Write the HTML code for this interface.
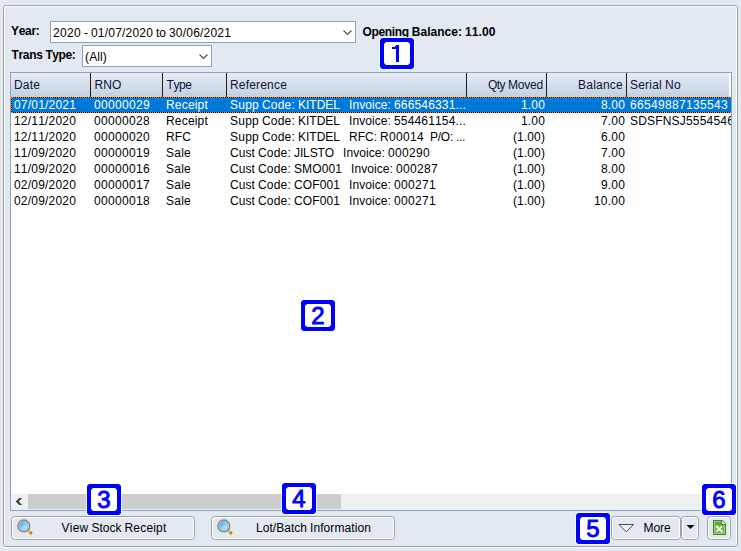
<!DOCTYPE html>
<html><head><meta charset="utf-8"><style>
*{margin:0;padding:0;box-sizing:border-box}
html,body{width:741px;height:551px;overflow:hidden;background:#e3e9f1;font-family:"Liberation Sans",sans-serif;font-size:12px;color:#000;font-kerning:none;font-variant-ligatures:none}
.a{position:absolute}
.t{position:absolute;white-space:pre}
.panel{position:absolute;left:3px;top:5px;width:735px;height:542px;border:1px solid #a0a0a0;border-radius:3px;box-shadow:inset 1px 1px 0 #fff,inset -1px 0 0 #fff,0 1px 0 #fff}
.combo{position:absolute;background:#fff;border:1px solid #89a3c0}
.btn{position:absolute;top:516px;height:24px;border:1px solid #a3a3a3;border-radius:3.5px;box-shadow:inset 1px 1px 0 #fff,inset -1px -1px 0 #fff}
</style></head><body>
<div class="panel"></div>
<div class="t" style="left:11.00px;top:24px;line-height:14px;font-weight:bold;letter-spacing:-0.304px">Year:</div>
<div class="combo" style="left:50px;top:21px;width:306px;height:22px"></div>
<div class="t" style="left:53.00px;top:26px;line-height:14px;letter-spacing:0.326px">2020</div>
<div class="t" style="left:84.00px;top:26px;line-height:14px;letter-spacing:0.004px">-</div>
<div class="t" style="left:91.00px;top:26px;line-height:14px;letter-spacing:0.194px">01/07/2020</div>
<div class="t" style="left:156.00px;top:26px;line-height:14px;letter-spacing:-0.004px">to</div>
<div class="t" style="left:169.00px;top:26px;line-height:14px;letter-spacing:0.194px">30/06/2021</div>
<svg class="a" style="left:340px;top:26px" width="14" height="12" viewBox="0 0 14 12"><path d="M3.5,4.5 L7.5,8.5 L11.5,4.5" fill="none" stroke="#505050" stroke-width="1.1"/></svg>
<div class="t" style="left:362.50px;top:25px;line-height:14px;font-weight:bold;letter-spacing:-0.337px">Opening</div>
<div class="t" style="left:411.76px;top:25px;line-height:14px;font-weight:bold;letter-spacing:0.028px">Balance:</div>
<div class="t" style="left:464.96px;top:25px;line-height:14px;font-weight:bold;letter-spacing:0.102px">11.00</div>
<div class="t" style="left:11.50px;top:48px;line-height:14px;font-weight:bold;letter-spacing:-0.324px">Trans</div>
<div class="t" style="left:45.38px;top:48px;line-height:14px;font-weight:bold;letter-spacing:-0.377px">Type:</div>
<div class="combo" style="left:82px;top:45px;width:130px;height:22px"></div>
<div class="t" style="left:85.00px;top:50px;line-height:14px;letter-spacing:0.134px">(All)</div>
<svg class="a" style="left:196px;top:50px" width="14" height="12" viewBox="0 0 14 12"><path d="M3.5,4.5 L7.5,8.5 L11.5,4.5" fill="none" stroke="#505050" stroke-width="1.1"/></svg>
<div class="a" style="left:10px;top:72px;width:722px;height:439px;border:1px solid #8ca3bc;background:#fff"></div>
<div class="a" style="left:11px;top:73px;width:718px;height:24px;background:linear-gradient(#e7ecf5,#c3d0e1)"></div>
<div class="a" style="left:90px;top:73px;width:1px;height:24px;background:#1e1e1e"></div>
<div class="a" style="left:162px;top:73px;width:1px;height:24px;background:#1e1e1e"></div>
<div class="a" style="left:226px;top:73px;width:1px;height:24px;background:#1e1e1e"></div>
<div class="a" style="left:466px;top:73px;width:1px;height:24px;background:#1e1e1e"></div>
<div class="a" style="left:546px;top:73px;width:1px;height:24px;background:#1e1e1e"></div>
<div class="a" style="left:626px;top:73px;width:1px;height:24px;background:#1e1e1e"></div>
<div class="t" style="left:14.00px;top:73px;line-height:24px;color:#10103a;letter-spacing:0.163px">Date</div>
<div class="t" style="left:94.50px;top:73px;line-height:24px;color:#10103a;letter-spacing:0.111px">RNO</div>
<div class="t" style="left:166.50px;top:73px;line-height:24px;color:#10103a;letter-spacing:-0.419px">Type</div>
<div class="t" style="left:230.00px;top:73px;line-height:24px;color:#10103a;letter-spacing:0.182px">Reference</div>
<div class="t" style="left:488.00px;top:73px;line-height:24px;color:#10103a;letter-spacing:-0.533px">Qty</div>
<div class="t" style="left:507.91px;top:73px;line-height:24px;color:#10103a;letter-spacing:-0.186px">Moved</div>
<div class="t" style="left:578.00px;top:73px;line-height:24px;color:#10103a;letter-spacing:0.234px">Balance</div>
<div class="t" style="left:630.00px;top:73px;line-height:24px;color:#10103a;letter-spacing:0.220px">Serial</div>
<div class="t" style="left:665.00px;top:73px;line-height:24px;color:#10103a;letter-spacing:0.330px">No</div>
<div class="a" style="left:11px;top:97px;width:720px;height:16px;background:#0078d7"></div>
<div class="t" style="left:14.00px;top:97px;line-height:16px;color:#fff;letter-spacing:0.194px">07/01/2021</div>
<div class="t" style="left:94.00px;top:97px;line-height:16px;color:#fff;letter-spacing:0.326px">00000029</div>
<div class="t" style="left:166.00px;top:97px;line-height:16px;color:#fff;letter-spacing:0.188px">Receipt</div>
<div class="t" style="left:230.00px;top:97px;line-height:16px;color:#fff;letter-spacing:0.244px">Supp</div>
<div class="t" style="left:262.00px;top:97px;line-height:16px;color:#fff;letter-spacing:0.196px">Code:</div>
<div class="t" style="left:298.00px;top:97px;line-height:16px;color:#fff;letter-spacing:-0.002px">KITDEL</div>
<div class="t" style="left:349.00px;top:97px;line-height:16px;color:#fff;letter-spacing:0.081px">Invoice:</div>
<div class="t" style="left:394.00px;top:97px;line-height:16px;color:#fff;letter-spacing:0.161px">666546331...</div>
<div class="t" style="left:521.00px;top:97px;line-height:16px;color:#fff;letter-spacing:0.161px">1.00</div>
<div class="t" style="left:601.00px;top:97px;line-height:16px;color:#fff;letter-spacing:0.161px">8.00</div>
<div class="a" style="left:627px;top:97px;width:104px;height:16px;overflow:hidden"><div class="t" style="left:3.00px;top:0px;line-height:16px;color:#fff;letter-spacing:0.326px">66549887135543</div></div>
<div class="t" style="left:14.00px;top:113px;line-height:16px;letter-spacing:0.194px">12/11/2020</div>
<div class="t" style="left:94.00px;top:113px;line-height:16px;letter-spacing:0.326px">00000028</div>
<div class="t" style="left:166.00px;top:113px;line-height:16px;letter-spacing:0.188px">Receipt</div>
<div class="t" style="left:230.00px;top:113px;line-height:16px;letter-spacing:0.244px">Supp</div>
<div class="t" style="left:262.00px;top:113px;line-height:16px;letter-spacing:0.196px">Code:</div>
<div class="t" style="left:298.00px;top:113px;line-height:16px;letter-spacing:-0.002px">KITDEL</div>
<div class="t" style="left:349.00px;top:113px;line-height:16px;letter-spacing:0.081px">Invoice:</div>
<div class="t" style="left:394.00px;top:113px;line-height:16px;letter-spacing:0.161px">554461154...</div>
<div class="t" style="left:521.00px;top:113px;line-height:16px;letter-spacing:0.161px">1.00</div>
<div class="t" style="left:601.00px;top:113px;line-height:16px;letter-spacing:0.161px">7.00</div>
<div class="a" style="left:627px;top:113px;width:104px;height:16px;overflow:hidden"><div class="t" style="left:3.00px;top:0px;line-height:16px;letter-spacing:0.186px">SDSFNSJ5554546</div></div>
<div class="t" style="left:14.00px;top:129px;line-height:16px;letter-spacing:0.194px">12/11/2020</div>
<div class="t" style="left:94.00px;top:129px;line-height:16px;letter-spacing:0.326px">00000020</div>
<div class="t" style="left:166.00px;top:129px;line-height:16px;letter-spacing:0.113px">RFC</div>
<div class="t" style="left:230.00px;top:129px;line-height:16px;letter-spacing:0.244px">Supp</div>
<div class="t" style="left:262.00px;top:129px;line-height:16px;letter-spacing:0.196px">Code:</div>
<div class="t" style="left:298.00px;top:129px;line-height:16px;letter-spacing:-0.002px">KITDEL</div>
<div class="t" style="left:349.00px;top:129px;line-height:16px;letter-spacing:0.001px">RFC:</div>
<div class="t" style="left:380.00px;top:129px;line-height:16px;letter-spacing:0.327px">R00014</div>
<div class="t" style="left:430.00px;top:129px;line-height:16px;letter-spacing:-0.251px">P/O:</div>
<div class="t" style="left:456.00px;top:129px;line-height:16px;letter-spacing:-0.334px">...</div>
<div class="t" style="left:513.00px;top:129px;line-height:16px;letter-spacing:0.109px">(1.00)</div>
<div class="t" style="left:601.00px;top:129px;line-height:16px;letter-spacing:0.161px">6.00</div>
<div class="t" style="left:14.00px;top:145px;line-height:16px;letter-spacing:0.194px">11/09/2020</div>
<div class="t" style="left:94.00px;top:145px;line-height:16px;letter-spacing:0.326px">00000019</div>
<div class="t" style="left:166.00px;top:145px;line-height:16px;letter-spacing:0.246px">Sale</div>
<div class="t" style="left:230.00px;top:145px;line-height:16px;letter-spacing:0.082px">Cust</div>
<div class="t" style="left:258.00px;top:145px;line-height:16px;letter-spacing:0.196px">Code:</div>
<div class="t" style="left:294.00px;top:145px;line-height:16px;letter-spacing:-0.113px">JILSTO</div>
<div class="t" style="left:343.00px;top:145px;line-height:16px;letter-spacing:0.081px">Invoice:</div>
<div class="t" style="left:388.00px;top:145px;line-height:16px;letter-spacing:0.326px">000290</div>
<div class="t" style="left:513.00px;top:145px;line-height:16px;letter-spacing:0.109px">(1.00)</div>
<div class="t" style="left:601.00px;top:145px;line-height:16px;letter-spacing:0.161px">7.00</div>
<div class="t" style="left:14.00px;top:161px;line-height:16px;letter-spacing:0.194px">11/09/2020</div>
<div class="t" style="left:94.00px;top:161px;line-height:16px;letter-spacing:0.326px">00000016</div>
<div class="t" style="left:166.00px;top:161px;line-height:16px;letter-spacing:0.246px">Sale</div>
<div class="t" style="left:230.00px;top:161px;line-height:16px;letter-spacing:0.082px">Cust</div>
<div class="t" style="left:258.00px;top:161px;line-height:16px;letter-spacing:0.196px">Code:</div>
<div class="t" style="left:294.00px;top:161px;line-height:16px;letter-spacing:0.107px">SMO001</div>
<div class="t" style="left:351.00px;top:161px;line-height:16px;letter-spacing:0.081px">Invoice:</div>
<div class="t" style="left:396.00px;top:161px;line-height:16px;letter-spacing:0.326px">000287</div>
<div class="t" style="left:513.00px;top:161px;line-height:16px;letter-spacing:0.109px">(1.00)</div>
<div class="t" style="left:601.00px;top:161px;line-height:16px;letter-spacing:0.161px">8.00</div>
<div class="t" style="left:14.00px;top:177px;line-height:16px;letter-spacing:0.194px">02/09/2020</div>
<div class="t" style="left:94.00px;top:177px;line-height:16px;letter-spacing:0.326px">00000017</div>
<div class="t" style="left:166.00px;top:177px;line-height:16px;letter-spacing:0.246px">Sale</div>
<div class="t" style="left:230.00px;top:177px;line-height:16px;letter-spacing:0.082px">Cust</div>
<div class="t" style="left:258.00px;top:177px;line-height:16px;letter-spacing:0.196px">Code:</div>
<div class="t" style="left:294.00px;top:177px;line-height:16px;letter-spacing:0.108px">COF001</div>
<div class="t" style="left:349.00px;top:177px;line-height:16px;letter-spacing:0.081px">Invoice:</div>
<div class="t" style="left:394.00px;top:177px;line-height:16px;letter-spacing:0.326px">000271</div>
<div class="t" style="left:513.00px;top:177px;line-height:16px;letter-spacing:0.109px">(1.00)</div>
<div class="t" style="left:601.00px;top:177px;line-height:16px;letter-spacing:0.161px">9.00</div>
<div class="t" style="left:14.00px;top:193px;line-height:16px;letter-spacing:0.194px">02/09/2020</div>
<div class="t" style="left:94.00px;top:193px;line-height:16px;letter-spacing:0.326px">00000018</div>
<div class="t" style="left:166.00px;top:193px;line-height:16px;letter-spacing:0.246px">Sale</div>
<div class="t" style="left:230.00px;top:193px;line-height:16px;letter-spacing:0.082px">Cust</div>
<div class="t" style="left:258.00px;top:193px;line-height:16px;letter-spacing:0.196px">Code:</div>
<div class="t" style="left:294.00px;top:193px;line-height:16px;letter-spacing:0.108px">COF001</div>
<div class="t" style="left:349.00px;top:193px;line-height:16px;letter-spacing:0.081px">Invoice:</div>
<div class="t" style="left:394.00px;top:193px;line-height:16px;letter-spacing:0.326px">000271</div>
<div class="t" style="left:513.00px;top:193px;line-height:16px;letter-spacing:0.109px">(1.00)</div>
<div class="t" style="left:594.00px;top:193px;line-height:16px;letter-spacing:0.194px">10.00</div>
<div class="a" style="left:11px;top:97px;width:720px;height:16px;border:1px solid #000;border-right:none"></div>
<div class="a" style="left:11px;top:97px;width:720px;height:16px;border:1px dotted #ff8728;border-right:none"></div>
<div class="a" style="left:729px;top:73px;width:2px;height:24px;background:#fff"></div>
<div class="a" style="left:11px;top:494px;width:720px;height:16px;background:#f0f0f0"></div>
<div class="a" style="left:28px;top:494px;width:313px;height:15px;background:#cdcdcd"></div>
<svg class="a" style="left:11px;top:494px" width="17" height="16" viewBox="0 0 17 16"><path d="M11.2,4 H8.2 L4.7,7.5 L8.2,11 H11.2 L7.7,7.5 Z" fill="#404040"/></svg>
<div class="btn" style="left:11px;width:184px"></div>
<svg class="a" style="left:11px;top:516px" width="30" height="24" viewBox="0 0 30 24">
<defs><linearGradient id="lg1" x1="0" y1="0" x2="1" y2="1"><stop offset="0" stop-color="#3f98e6"/><stop offset="0.6" stop-color="#9fdcf7"/><stop offset="1" stop-color="#c9f2fb"/></linearGradient>
<linearGradient id="og1" x1="0" y1="0" x2="1" y2="1"><stop offset="0" stop-color="#f7c760"/><stop offset="1" stop-color="#d9820c"/></linearGradient></defs>
<path d="M18.3,15.4 L19.8,16.9" stroke="url(#og1)" stroke-width="3.4" stroke-linecap="round"/>
<path d="M16.7,13.8 L17.9,15" stroke="#a9b4bd" stroke-width="2.4"/>
<circle cx="12.8" cy="9.9" r="5.9" fill="#fff" stroke="#858585" stroke-width="1.5"/>
<circle cx="12.8" cy="9.9" r="4.3" fill="url(#lg1)" stroke="#5aa8ea" stroke-width="0.8"/>
</svg>
<div class="t" style="left:61.50px;top:516px;line-height:24px;letter-spacing:0.248px">View</div>
<div class="t" style="left:91.50px;top:516px;line-height:24px;letter-spacing:-0.002px">Stock</div>
<div class="t" style="left:124.50px;top:516px;line-height:24px;letter-spacing:0.188px">Receipt</div>
<div class="btn" style="left:211px;width:184px"></div>
<svg class="a" style="left:211px;top:516px" width="30" height="24" viewBox="0 0 30 24">
<defs><linearGradient id="lg2" x1="0" y1="0" x2="1" y2="1"><stop offset="0" stop-color="#3f98e6"/><stop offset="0.6" stop-color="#9fdcf7"/><stop offset="1" stop-color="#c9f2fb"/></linearGradient>
<linearGradient id="og2" x1="0" y1="0" x2="1" y2="1"><stop offset="0" stop-color="#f7c760"/><stop offset="1" stop-color="#d9820c"/></linearGradient></defs>
<path d="M18.3,15.4 L19.8,16.9" stroke="url(#og2)" stroke-width="3.4" stroke-linecap="round"/>
<path d="M16.7,13.8 L17.9,15" stroke="#a9b4bd" stroke-width="2.4"/>
<circle cx="12.8" cy="9.9" r="5.9" fill="#fff" stroke="#858585" stroke-width="1.5"/>
<circle cx="12.8" cy="9.9" r="4.3" fill="url(#lg2)" stroke="#5aa8ea" stroke-width="0.8"/>
</svg>
<div class="t" style="left:256.00px;top:516px;line-height:24px;letter-spacing:0.033px">Lot/Batch</div>
<div class="t" style="left:310.00px;top:516px;line-height:24px;letter-spacing:0.088px">Information</div>
<div class="btn" style="left:611px;width:70px"></div>
<svg class="a" style="left:611px;top:516px" width="30" height="24" viewBox="0 0 30 24"><defs><linearGradient id="wg" x1="0" y1="0" x2="0" y2="1"><stop offset="0" stop-color="#eeeeee"/><stop offset="1" stop-color="#fff"/></linearGradient></defs><path d="M8,8.5 H22.5 L15.2,15.8 Z" fill="url(#wg)" stroke="#4a4a4a" stroke-width="1" stroke-linejoin="miter"/></svg>
<div class="t" style="left:643.50px;top:516px;line-height:24px;letter-spacing:-0.085px">More</div>
<div class="btn" style="left:681px;width:18px"></div>
<svg class="a" style="left:681.5px;top:516px" width="17" height="24" viewBox="0 0 17 24"><path d="M4.5,9 H12.5 L8.5,13 Z" fill="#000"/></svg>
<div class="btn" style="left:707px;width:24px"></div>
<svg class="a" style="left:707px;top:516px" width="24" height="24" viewBox="0 0 24 24">
<path d="M6,4 H15.5 L19,7.5 V19 H6 Z" fill="#3d8b1d"/>
<path d="M7,5 H15 L18,8 V18 H7 Z" fill="#9ad47a"/>
<path d="M8,6 H14.5 L17,8.5 V17 H8 Z" fill="#72b84a"/>
<path d="M8,6 H14 V9 H8 Z" fill="#67a03c"/>
<path d="M14.5,4.3 L18.7,8.5 H14.5 Z" fill="#fff"/>
<path d="M14.5,4 V8.5 H19" fill="none" stroke="#3d8b1d" stroke-width="1"/>
<path d="M9.5,10.5 L15.5,16 M15,10.5 L9.5,15.5 M9,10.7 H11" stroke="#fff" stroke-width="1.7" fill="none"/>
</svg>
<svg class="a" style="left:380px;top:38px;overflow:visible" width="34" height="31" viewBox="0 0 34 31">
<path d="M1.5,-0.5 H32.5 L34.5,1.5 V29.5 L32.5,31.5 H1.5 L-0.5,29.5 V1.5 Z" fill="none" stroke="#fff" stroke-opacity="0.7" stroke-width="1"/>
<path d="M2,0 H32 L34,2 V29 L32,31 H2 L0,29 V2 Z" fill="#0000ff"/>
<path d="M6,4 H28 L30,6 V25 L28,27 H6 L4,25 V6 Z" fill="#fff"/>
<path d="M16,7 H19 V24 H16 Z M12,9 H16 V11 H12 Z M15,8 H16 V9 H15 Z" fill="#0000ff"/>
</svg>
<svg class="a" style="left:301px;top:300px;overflow:visible" width="34" height="31" viewBox="0 0 34 31">
<path d="M1.5,-0.5 H32.5 L34.5,1.5 V29.5 L32.5,31.5 H1.5 L-0.5,29.5 V1.5 Z" fill="none" stroke="#fff" stroke-opacity="0.7" stroke-width="1"/>
<path d="M2,0 H32 L34,2 V29 L32,31 H2 L0,29 V2 Z" fill="#0000ff"/>
<path d="M6,4 H28 L30,6 V25 L28,27 H6 L4,25 V6 Z" fill="#fff"/>
<text x="17" y="24" text-anchor="middle" font-size="24" fill="#0000ff" stroke="#0000ff" stroke-width="0.9" font-family="Liberation Sans">2</text>
</svg>
<svg class="a" style="left:87px;top:484px;overflow:visible" width="34" height="31" viewBox="0 0 34 31">
<path d="M1.5,-0.5 H32.5 L34.5,1.5 V29.5 L32.5,31.5 H1.5 L-0.5,29.5 V1.5 Z" fill="none" stroke="#fff" stroke-opacity="0.7" stroke-width="1"/>
<path d="M2,0 H32 L34,2 V29 L32,31 H2 L0,29 V2 Z" fill="#0000ff"/>
<path d="M6,4 H28 L30,6 V25 L28,27 H6 L4,25 V6 Z" fill="#fff"/>
<text x="17" y="24" text-anchor="middle" font-size="24" fill="#0000ff" stroke="#0000ff" stroke-width="0.9" font-family="Liberation Sans">3</text>
</svg>
<svg class="a" style="left:282px;top:483px;overflow:visible" width="34" height="31" viewBox="0 0 34 31">
<path d="M1.5,-0.5 H32.5 L34.5,1.5 V29.5 L32.5,31.5 H1.5 L-0.5,29.5 V1.5 Z" fill="none" stroke="#fff" stroke-opacity="0.7" stroke-width="1"/>
<path d="M2,0 H32 L34,2 V29 L32,31 H2 L0,29 V2 Z" fill="#0000ff"/>
<path d="M6,4 H28 L30,6 V25 L28,27 H6 L4,25 V6 Z" fill="#fff"/>
<text x="17" y="24" text-anchor="middle" font-size="24" fill="#0000ff" stroke="#0000ff" stroke-width="0.9" font-family="Liberation Sans">4</text>
</svg>
<svg class="a" style="left:576px;top:513px;overflow:visible" width="34" height="31" viewBox="0 0 34 31">
<path d="M1.5,-0.5 H32.5 L34.5,1.5 V29.5 L32.5,31.5 H1.5 L-0.5,29.5 V1.5 Z" fill="none" stroke="#fff" stroke-opacity="0.7" stroke-width="1"/>
<path d="M2,0 H32 L34,2 V29 L32,31 H2 L0,29 V2 Z" fill="#0000ff"/>
<path d="M6,4 H28 L30,6 V25 L28,27 H6 L4,25 V6 Z" fill="#fff"/>
<text x="17" y="24" text-anchor="middle" font-size="24" fill="#0000ff" stroke="#0000ff" stroke-width="0.9" font-family="Liberation Sans">5</text>
</svg>
<svg class="a" style="left:702px;top:484px;overflow:visible" width="34" height="31" viewBox="0 0 34 31">
<path d="M1.5,-0.5 H32.5 L34.5,1.5 V29.5 L32.5,31.5 H1.5 L-0.5,29.5 V1.5 Z" fill="none" stroke="#fff" stroke-opacity="0.7" stroke-width="1"/>
<path d="M2,0 H32 L34,2 V29 L32,31 H2 L0,29 V2 Z" fill="#0000ff"/>
<path d="M6,4 H28 L30,6 V25 L28,27 H6 L4,25 V6 Z" fill="#fff"/>
<text x="17" y="24" text-anchor="middle" font-size="24" fill="#0000ff" stroke="#0000ff" stroke-width="0.9" font-family="Liberation Sans">6</text>
</svg>
</body></html>
